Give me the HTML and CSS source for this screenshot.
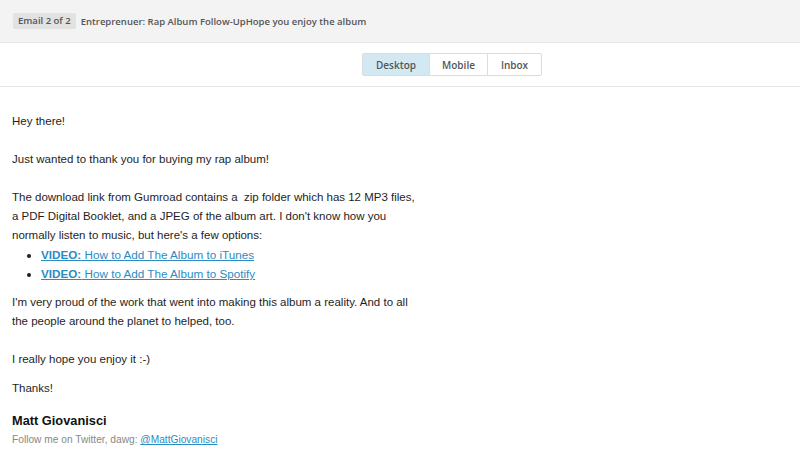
FILE: index.html
```html
<!DOCTYPE html>
<html>
<head>
<meta charset="utf-8">
<link rel="stylesheet" href="styles.css">
</head>
<body>
<header class="topbar">
  <span class="badge">Email 2 of 2</span>
  <span class="subject">Entreprenuer: Rap Album Follow-UpHope you enjoy the album</span>
</header>
<nav class="tabbar">
  <div class="tabs">
    <span class="tab active">Desktop</span>
    <span class="tab">Mobile</span>
    <span class="tab">Inbox</span>
  </div>
</nav>
<main class="email">
  <p>Hey there!</p>
  <p>Just wanted to thank you for buying my rap album!</p>
  <p class="tight">The download link from Gumroad contains a &nbsp;zip folder which has 12 MP3 files,<br>a PDF Digital Booklet, and a JPEG of the album art. I don't know how you<br>normally listen to music, but here's a few options:</p>
  <ul class="links">
    <li><a href="#"><b>VIDEO:</b> How to Add The Album to iTunes</a></li>
    <li><a href="#"><b>VIDEO:</b> How to Add The Album to Spotify</a></li>
  </ul>
  <p>I'm very proud of the work that went into making this album a reality. And to all<br>the people around the planet to helped, too.</p>
  <p class="short">I really hope you enjoy it :-)</p>
  <p class="thanks">Thanks!</p>
  <div class="sig">
    <div class="name">Matt Giovanisci</div>
    <div class="follow">Follow me on Twitter, dawg: <a href="#">@MattGiovanisci</a></div>
  </div>
</main>
</body>
</html>
```

FILE: styles.css
```css
* { box-sizing: border-box; }
html, body { margin: 0; padding: 0; background: #fff; }
body { width: 800px; height: 465px; overflow: hidden; }

.topbar {
  height: 43px;
  background: #f3f3f3;
  border-bottom: 1px solid #e6e6e6;
  display: flex;
  align-items: center;
  padding-left: 13px;
  font-family: "Open Sans", sans-serif;
  font-size: 9.5px;
  font-weight: 600;
  color: #555;
}
.badge {
  background: #e2e2e2;
  padding: 2px 5px;
  line-height: 12px;
  border-radius: 2px;
  margin-right: 5px;
  white-space: nowrap;
}
.subject { color: #555; white-space: nowrap; }

.tabbar {
  height: 44px;
  border-bottom: 1px solid #e8e8e8;
  display: flex;
  align-items: center;
  padding-left: 362px;
}
.tabs {
  display: flex;
  border: 1px solid #dcdcdc;
  border-radius: 2px;
  height: 23px;
  font-family: "Open Sans", sans-serif;
  font-size: 10px;
  font-weight: 600;
  color: #555;
}
.tab {
  display: flex;
  align-items: center;
  justify-content: center;
  border-left: 1px solid #dcdcdc;
}
.tab:first-child { border-left: 0; width: 66px; }
.tab:nth-child(2) { width: 58px; }
.tab:nth-child(3) { width: 54px; }
.tab.active { background: #d2e8f3; }

.email {
  padding: 25px 12px 0;
  font-family: "Liberation Sans", Arial, sans-serif;
  font-size: 11.5px;
  line-height: 19px;
  color: #1e1e1e;
}
.email p { margin: 0 0 19px; }
.email p.tight { margin-bottom: 0; }
.email p.short { margin-bottom: 10px; }
.links {
  margin: 0 0 10px;
  padding-left: 29px;
  font-size: 11.7px;
  line-height: 19px;
}
.links a { color: #2b8cc4; text-decoration: underline; }
.email p.thanks { margin-bottom: 13px; }
.sig .name {
  font-weight: bold;
  font-size: 12.8px;
  line-height: 20px;
  color: #111;
}
.sig .follow {
  font-size: 10.2px;
  line-height: 16px;
  color: #888;
  margin-top: 1px;
}
.sig .follow a { color: #2b8cc4; text-decoration: underline; }
```
